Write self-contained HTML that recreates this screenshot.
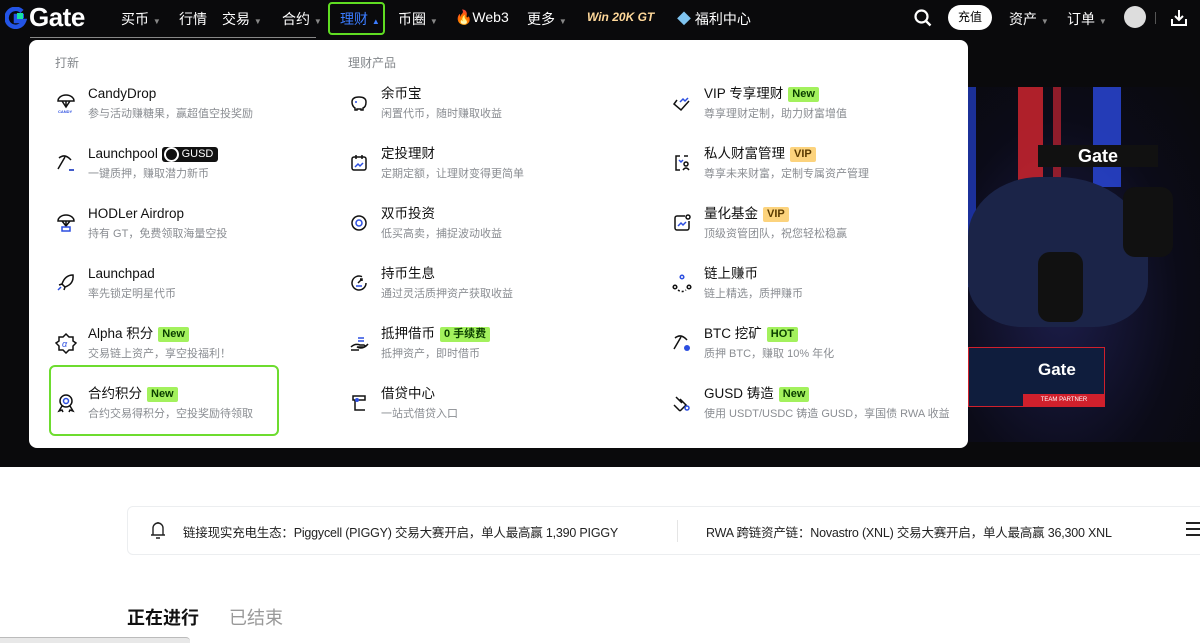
<!DOCTYPE html>
<html><head><meta charset="utf-8"><style>
*{margin:0;padding:0;box-sizing:border-box}
body{width:1200px;height:643px;overflow:hidden;background:#fff;font-family:"Liberation Sans","Noto Sans CJK SC",sans-serif;position:relative}
.dark{position:absolute;left:0;top:0;width:1200px;height:467px;background:#0a0a0c}
.nav{position:absolute;top:0;left:0;width:1200px;height:36px;color:#fff;font-size:14px}
.nav span{position:absolute;top:9px;white-space:nowrap}
.car{position:absolute;left:968px;top:87px;width:232px;height:355px;background:radial-gradient(ellipse at 40% 60%,#1c1d4a 0%,#0b0b18 60%,#0a0a0c 100%);overflow:hidden}
.panel{position:absolute;left:29px;top:40px;width:939px;height:408px;background:#fff;border-radius:8px}
.h{position:absolute;font-size:12px;color:#84888c}
.it{position:absolute}
.it .t{position:absolute;left:0;top:0;font-size:13.5px;color:#111;white-space:nowrap;line-height:18px}
.it .s{position:absolute;left:0;top:21px;font-size:11px;color:#8a8d92;white-space:nowrap;line-height:16px}
.b{display:inline-block;font-size:11px;font-weight:bold;padding:0 4px;line-height:15px;border-radius:2px;margin-left:5px;vertical-align:1px}
.g{background:#a3f15d;color:#0a3d00}.v{background:#fcd37d;color:#5a3a00}
.ic{position:absolute;width:22px;height:22px}
</style></head><body>
<div class="dark"></div>
<div class="nav">
<svg style="position:absolute;left:5px;top:7px" width="22" height="22" viewBox="0 0 22 22"><path d="M17 4.5A9 9 0 1 0 19 14h-8V9h8" fill="none" stroke="#2354e6" stroke-width="4.5"/><rect x="12" y="6" width="6" height="6" fill="#17e5a0"/></svg>
<span style="left:29px;top:2px;font-size:26px;font-weight:bold;letter-spacing:-0.5px">Gate</span>
<span style="left:121px">买币 <small style="color:#888;font-size:8px">▼</small></span>
<span style="left:179px">行情</span>
<span style="left:222px">交易 <small style="color:#888;font-size:8px">▼</small></span>
<span style="left:282px">合约 <small style="color:#888;font-size:8px">▼</small></span>
<div style="position:absolute;left:328px;top:2px;width:57px;height:33px;border:2px solid #5fdc22;border-radius:4px"></div>
<span style="left:340px;color:#3b7cff">理财 <small style="font-size:8px">▲</small></span>
<span style="left:398px">币圈 <small style="color:#888;font-size:8px">▼</small></span>
<span style="left:455px">🔥Web3</span>
<span style="left:527px">更多 <small style="color:#888;font-size:8px">▼</small></span>
<span style="left:587px;top:10px;font-size:12px;font-weight:bold;font-style:italic;color:#ffd89a">Win 20K GT</span>
<span style="left:677px"><span style="position:static;color:#7fc4f0">◆</span> 福利中心</span>
<svg style="position:absolute;left:913px;top:8px" width="20" height="20" viewBox="0 0 20 20"><circle cx="8.5" cy="8.5" r="6" fill="none" stroke="#fff" stroke-width="2.2"/><path d="M13 13l4.5 4.5" stroke="#fff" stroke-width="2.4"/></svg>
<div style="position:absolute;left:948px;top:5px;width:44px;height:25px;background:#fff;border-radius:13px;color:#000;font-size:12px;text-align:center;line-height:25px">充值</div>
<span style="left:1009px">资产 <small style="color:#888;font-size:8px">▼</small></span>
<span style="left:1067px">订单 <small style="color:#888;font-size:8px">▼</small></span>
<div style="position:absolute;left:1124px;top:6px;width:22px;height:22px;border-radius:50%;background:#ddd"></div>
<div style="position:absolute;left:1155px;top:12px;width:1px;height:12px;background:#555"></div>
<svg style="position:absolute;left:1169px;top:8px" width="20" height="20" viewBox="0 0 20 20"><path d="M10 2v10M6 8l4 4 4-4M3 11v6h14v-6" fill="none" stroke="#fff" stroke-width="2"/></svg>
</div>
<div style="position:absolute;left:30px;top:37px;width:286px;height:1px;background:#888"></div>
<div class="car">
<div style="position:absolute;left:0;top:0;width:8px;height:200px;background:#2240d0;opacity:.7"></div>
<div style="position:absolute;left:50px;top:0;width:25px;height:110px;background:#d8262f;opacity:.8"></div>
<div style="position:absolute;left:85px;top:0;width:8px;height:110px;background:#b02030;opacity:.8"></div>
<div style="position:absolute;left:125px;top:0;width:28px;height:100px;background:#2a48e0;opacity:.8"></div>
<div style="position:absolute;left:0px;top:90px;width:180px;height:150px;background:#1b2448;border-radius:40% 50% 30% 30%"></div>
<div style="position:absolute;left:70px;top:58px;width:120px;height:22px;background:#111;color:#fff;font-weight:bold;font-size:18px;text-align:center;line-height:22px">Gate</div>
<div style="position:absolute;left:155px;top:100px;width:50px;height:70px;background:#111;border-radius:12px"></div>
<div style="position:absolute;left:70px;top:165px;width:45px;height:70px;background:#111;border-radius:12px"></div>
<div style="position:absolute;left:0;top:260px;width:137px;height:60px;background:#0f1d3d;border:1px solid #d0202c"></div>
<div style="position:absolute;left:70px;top:273px;color:#fff;font-weight:bold;font-size:17px">Gate</div>
<div style="position:absolute;left:55px;top:307px;width:82px;height:12px;background:#d0202c;color:#fff;font-size:6px;text-align:center;line-height:12px">TEAM PARTNER</div>
</div>
<div class="panel">
<div class="h" style="left:26px;top:14px">打新</div>
<div class="h" style="left:319px;top:14px">理财产品</div>
<div style="position:absolute;left:20px;top:325px;width:230px;height:71px;border:2px solid #6ddc2f;border-radius:6px"></div>
</div>
<svg class="ic" style="left:55px;top:92px" viewBox="0 0 22 22" fill="none" stroke="#111" stroke-width="1.5"><path d="M3 9a8 6 0 0 1 16 0H3zM7 9l4 6 4-6M11 9v6"/><text x="3" y="21" font-size="4" fill="#2c4ee0" stroke="none" font-weight="bold">CANDY</text></svg>
<svg class="ic" style="left:55px;top:152px" viewBox="0 0 22 22" fill="none" stroke="#111" stroke-width="1.5"><path d="M4 6q6-5 12 2M10 5l-7 12M14 18h5" /><path d="M14 18h5" stroke="#2c4ee0"/></svg>
<svg class="ic" style="left:55px;top:212px" viewBox="0 0 22 22" fill="none" stroke="#111" stroke-width="1.5"><path d="M3 9a8 6 0 0 1 16 0H3zM7 9l4 5 4-5M11 9v5"/><rect x="7" y="15" width="8" height="4" stroke="#2c4ee0"/></svg>
<svg class="ic" style="left:55px;top:272px" viewBox="0 0 22 22" fill="none" stroke="#111" stroke-width="1.5"><path d="M18 3q-8 0-11 9l3 3q9-3 8-12zM7 12l-3 1M10 15l-1 3"/><path d="M6 15l-3 3" stroke="#2c4ee0"/></svg>
<svg class="ic" style="left:55px;top:332px" viewBox="0 0 22 22" fill="none" stroke="#111" stroke-width="1.5"><path d="M11 2l3 3h4v4l3 2-3 3v4h-4l-3 3-3-3H4v-4l-3-3 3-2V5h4z"/><text x="7" y="15" font-size="9" fill="#2c4ee0" stroke="none" font-style="italic">α</text></svg>
<svg class="ic" style="left:55px;top:392px" viewBox="0 0 22 22" fill="none" stroke="#111" stroke-width="1.5"><circle cx="11" cy="9" r="6"/><path d="M7 14l-3 5 3-1 1 2M15 14l3 5-3-1-1 2"/><circle cx="11" cy="9" r="2.5" stroke="#2c4ee0"/></svg>
<div class="it" style="left:88px;top:85px"><div class="t">CandyDrop</div><div class="s">参与活动赚糖果，赢超值空投奖励</div></div>
<div class="it" style="left:88px;top:145px"><div class="t">Launchpool <span style="display:inline-block;background:#111;color:#fff;font-size:11px;padding:0 5px 0 20px;border-radius:3px;line-height:15px;position:relative;vertical-align:1px"><span style="position:absolute;left:2px;top:0px;width:15px;height:15px;border-radius:50%;background:#111;border:2px solid #fff"></span>GUSD</span></div><div class="s">一键质押，赚取潜力新币</div></div>
<div class="it" style="left:88px;top:205px"><div class="t">HODLer Airdrop</div><div class="s">持有 GT，免费领取海量空投</div></div>
<div class="it" style="left:88px;top:265px"><div class="t">Launchpad</div><div class="s">率先锁定明星代币</div></div>
<div class="it" style="left:88px;top:325px"><div class="t">Alpha 积分<span class="b g">New</span></div><div class="s">交易链上资产，享空投福利！</div></div>
<div class="it" style="left:88px;top:385px"><div class="t">合约积分<span class="b g">New</span></div><div class="s">合约交易得积分，空投奖励待领取</div></div>
<svg class="ic" style="left:348px;top:92px" viewBox="0 0 22 22" fill="none" stroke="#111" stroke-width="1.5"><path d="M4 10q0-5 7-5t7 5-3 6v2h-2v-1H9v1H7v-2q-3-2-3-6z"/><circle cx="8" cy="10" r="1" fill="#2c4ee0" stroke="none"/></svg>
<svg class="ic" style="left:348px;top:152px" viewBox="0 0 22 22" fill="none" stroke="#111" stroke-width="1.5"><rect x="4" y="5" width="14" height="13" rx="2"/><path d="M8 3v4M14 3v4"/><path d="M7 15l3-3 2 2 3-3" stroke="#2c4ee0"/></svg>
<svg class="ic" style="left:348px;top:212px" viewBox="0 0 22 22" fill="none" stroke="#111" stroke-width="1.5"><circle cx="11" cy="11" r="7"/><circle cx="11" cy="11" r="3" stroke="#2c4ee0"/></svg>
<svg class="ic" style="left:348px;top:272px" viewBox="0 0 22 22" fill="none" stroke="#111" stroke-width="1.5"><path d="M18 11a7 7 0 1 1-4-6.3M10 11l4-4M12 7h2v2"/><path d="M8 14h6" stroke="#2c4ee0"/></svg>
<svg class="ic" style="left:348px;top:332px" viewBox="0 0 22 22" fill="none" stroke="#111" stroke-width="1.5"><path d="M3 15q4-4 9-2h4q2 1 0 2H9q6 3 11-3M3 18h8"/><path d="M10 6h6M10 9h6" stroke="#2c4ee0"/></svg>
<svg class="ic" style="left:348px;top:392px" viewBox="0 0 22 22" fill="none" stroke="#111" stroke-width="1.5"><path d="M5 4h12v4H5zM7 8v10h10M5 4v4"/><circle cx="9" cy="8" r="2" fill="#2c4ee0" stroke="none"/></svg>
<div class="it" style="left:381px;top:85px"><div class="t">余币宝</div><div class="s">闲置代币，随时赚取收益</div></div>
<div class="it" style="left:381px;top:145px"><div class="t">定投理财</div><div class="s">定期定额，让理财变得更简单</div></div>
<div class="it" style="left:381px;top:205px"><div class="t">双币投资</div><div class="s">低买高卖，捕捉波动收益</div></div>
<div class="it" style="left:381px;top:265px"><div class="t">持币生息</div><div class="s">通过灵活质押资产获取收益</div></div>
<div class="it" style="left:381px;top:325px"><div class="t">抵押借币<span class="b g">0 手续费</span></div><div class="s">抵押资产，即时借币</div></div>
<div class="it" style="left:381px;top:385px"><div class="t">借贷中心</div><div class="s">一站式借贷入口</div></div>
<svg class="ic" style="left:671px;top:92px" viewBox="0 0 22 22" fill="none" stroke="#111" stroke-width="1.5"><path d="M6 8l-3 4 7 6 8-9"/><path d="M9 10l3-3 2 2 3-3" stroke="#2c4ee0"/></svg>
<svg class="ic" style="left:671px;top:152px" viewBox="0 0 22 22" fill="none" stroke="#111" stroke-width="1.5"><path d="M9 4H5v14h4M13 4h4"/><circle cx="15" cy="12" r="2"/><path d="M12 18q3-4 6 0"/><path d="M8 8l2 2 2-2" stroke="#2c4ee0"/></svg>
<svg class="ic" style="left:671px;top:212px" viewBox="0 0 22 22" fill="none" stroke="#111" stroke-width="1.5"><path d="M14 4H6a2 2 0 0 0-2 2v10a2 2 0 0 0 2 2h10a2 2 0 0 0 2-2V9"/><circle cx="17" cy="5" r="2"/><path d="M7 14l3-3 2 2 3-3" stroke="#2c4ee0"/></svg>
<svg class="ic" style="left:671px;top:272px" viewBox="0 0 22 22" fill="none" stroke="#111" stroke-width="1.5"><circle cx="11" cy="5" r="1.8" stroke="#2c4ee0"/><circle cx="4" cy="15" r="1.8"/><circle cx="18" cy="15" r="1.8"/><path d="M7 18q4 3 8 0" stroke-dasharray="2 2"/></svg>
<svg class="ic" style="left:671px;top:332px" viewBox="0 0 22 22" fill="none" stroke="#111" stroke-width="1.5"><path d="M4 6q6-5 12 2M10 5l-7 12"/><circle cx="16" cy="16" r="3" fill="#2c4ee0" stroke="none"/></svg>
<svg class="ic" style="left:671px;top:392px" viewBox="0 0 22 22" fill="none" stroke="#111" stroke-width="1.5"><path d="M5 5l6 6M3 13l6 6M9 7l6 6-6 6"/><circle cx="16" cy="16" r="2" stroke="#2c4ee0"/></svg>
<div class="it" style="left:704px;top:85px"><div class="t">VIP 专享理财<span class="b g">New</span></div><div class="s">尊享理财定制，助力财富增值</div></div>
<div class="it" style="left:704px;top:145px"><div class="t">私人财富管理<span class="b v">VIP</span></div><div class="s">尊享未来财富，定制专属资产管理</div></div>
<div class="it" style="left:704px;top:205px"><div class="t">量化基金<span class="b v">VIP</span></div><div class="s">顶级资管团队，祝您轻松稳赢</div></div>
<div class="it" style="left:704px;top:265px"><div class="t">链上赚币</div><div class="s">链上精选，质押赚币</div></div>
<div class="it" style="left:704px;top:325px"><div class="t">BTC 挖矿<span class="b g">HOT</span></div><div class="s">质押 BTC，赚取 10% 年化</div></div>
<div class="it" style="left:704px;top:385px"><div class="t">GUSD 铸造<span class="b g">New</span></div><div class="s">使用 USDT/USDC 铸造 GUSD，享国债 RWA 收益</div></div>
<div style="position:absolute;left:127px;top:506px;width:1090px;height:49px;border:1px solid #eceef0;border-radius:6px"></div>
<svg style="position:absolute;left:149px;top:520px" width="18" height="20" viewBox="0 0 18 20" fill="none" stroke="#222" stroke-width="1.4"><path d="M4 15V8a5 5 0 0 1 10 0v7M2 15h14M9 2v1M7 18h4"/></svg>
<div style="position:absolute;left:183px;top:522px;font-size:12.5px;color:#222;white-space:nowrap;letter-spacing:-0.2px">链接现实充电生态：Piggycell (PIGGY) 交易大赛开启，单人最高赢 1,390 PIGGY</div>
<div style="position:absolute;left:677px;top:520px;width:1px;height:22px;background:#e5e5e5"></div>
<div style="position:absolute;left:706px;top:522px;font-size:12.5px;color:#222;white-space:nowrap;letter-spacing:-0.2px">RWA 跨链资产链：Novastro (XNL) 交易大赛开启，单人最高赢 36,300 XNL</div>
<div style="position:absolute;left:1186px;top:522px;width:14px;height:14px;border-top:2px solid #222;border-bottom:2px solid #222"><div style="margin-top:4px;height:2px;background:#222"></div></div>
<div style="position:absolute;left:127px;top:604px;font-size:18px;font-weight:bold;color:#111">正在进行</div>
<div style="position:absolute;left:229px;top:604px;font-size:18px;color:#999">已结束</div>
<div style="position:absolute;left:158px;top:638px;width:8px;height:3px;background:#111"></div>
<div style="position:absolute;left:0;top:637px;width:190px;height:6px;background:#e8e8e8;border-top:1px solid #bbb;border-radius:0 4px 0 0"></div>
</body></html>
